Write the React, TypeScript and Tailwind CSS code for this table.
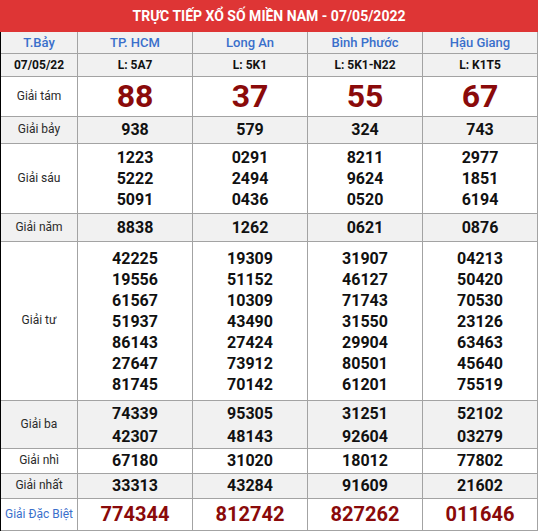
import React from 'react';

const provinces = [
  { name: 'TP. HCM', code: 'L: 5A7' },
  { name: 'Long An', code: 'L: 5K1' },
  { name: 'Bình Phước', code: 'L: 5K1-N22' },
  { name: 'Hậu Giang', code: 'L: K1T5' },
];

type Row = {
  label: string;
  h: string;
  lh: string;
  shaded?: boolean;
  kind?: 'big' | 'special';
  values: string[][];
};

const rows: Row[] = [
  { label: 'Giải tám', h: 'h-[39px]', lh: 'leading-[39px]', kind: 'big', values: [['88'], ['37'], ['55'], ['67']] },
  { label: 'Giải bảy', h: 'h-[26px]', lh: 'leading-[26px]', shaded: true, values: [['938'], ['579'], ['324'], ['743']] },
  {
    label: 'Giải sáu',
    h: 'h-[69px]',
    lh: 'leading-[21px]',
    values: [
      ['1223', '5222', '5091'],
      ['0291', '2494', '0436'],
      ['8211', '9624', '0520'],
      ['2977', '1851', '6194'],
    ],
  },
  { label: 'Giải năm', h: 'h-[27px]', lh: 'leading-[27px]', shaded: true, values: [['8838'], ['1262'], ['0621'], ['0876']] },
  {
    label: 'Giải tư',
    h: 'h-[158px]',
    lh: 'leading-[21px]',
    values: [
      ['42225', '19556', '61567', '51937', '86143', '27647', '81745'],
      ['19309', '51152', '10309', '43490', '27424', '73912', '70142'],
      ['31907', '46127', '71743', '31550', '29904', '80501', '61201'],
      ['04213', '50420', '70530', '23126', '63463', '45640', '75519'],
    ],
  },
  {
    label: 'Giải ba',
    h: 'h-[47px]',
    lh: 'leading-[23px]',
    shaded: true,
    values: [
      ['74339', '42307'],
      ['95305', '48143'],
      ['31251', '92604'],
      ['52102', '03279'],
    ],
  },
  { label: 'Giải nhì', h: 'h-[24px]', lh: 'leading-[24px]', values: [['67180'], ['31020'], ['18012'], ['77802']] },
  { label: 'Giải nhất', h: 'h-[24px]', lh: 'leading-[24px]', shaded: true, values: [['33313'], ['43284'], ['91609'], ['21602']] },
  { label: 'Giải Đặc Biệt', h: 'h-[31px]', lh: 'leading-[31px]', kind: 'special', values: [['774344'], ['812742'], ['827262'], ['011646']] },
];

export default function App() {
  return (
    <div className="w-[538px] h-[532px] bg-white font-['Roboto','Liberation_Sans',sans-serif]">
      {/* Title bar */}
      <div className="h-[32px] bg-[#de3535] flex items-center justify-center text-white font-bold text-[14px]">
        TRỰC TIẾP XỔ SỐ MIỀN NAM - 07/05/2022
      </div>

      <div className="grid grid-cols-[76px_114px_114px_114px_114px] gap-px bg-[#a3a3a3] border-l border-l-black pr-px pb-px">
        {/* Province names */}
        <div className="h-[21px] bg-[#f1f1f1] flex items-center justify-center text-[13px] font-medium text-[#3a6fcb]">
          T.Bảy
        </div>
        {provinces.map((p) => (
          <div key={p.name} className="h-[21px] bg-[#f1f1f1] flex items-center justify-center text-[13px] font-medium text-[#3a6fcb]">
            {p.name}
          </div>
        ))}

        {/* Dates and codes */}
        <div className="h-[22px] bg-[#f1f1f1] flex items-center justify-center text-[12px] font-bold text-[#111]">
          07/05/22
        </div>
        {provinces.map((p) => (
          <div key={p.code} className="h-[22px] bg-[#f1f1f1] flex items-center justify-center text-[12px] font-bold text-[#111]">
            {p.code}
          </div>
        ))}

        {rows.map((row) => (
          <React.Fragment key={row.label}>
            <div
              className={`${row.h} ${row.shaded ? 'bg-[#f1f1f1]' : 'bg-white'} flex items-center justify-center pb-[2px] text-[12px] ${
                row.kind === 'special' ? 'text-[#3a6fcb]' : 'text-[#2a2a2a]'
              }`}
            >
              {row.label}
            </div>
            {row.values.map((nums, i) => (
              <div
                key={i}
                className={`${row.h} ${row.shaded ? 'bg-[#f1f1f1]' : 'bg-white'} flex flex-col items-center justify-center`}
              >
                {nums.map((n) => (
                  <span
                    key={n}
                    className={
                      row.kind === 'big'
                        ? 'text-[32px] leading-[39px] font-bold text-[#8a0a0a]'
                        : row.kind === 'special'
                        ? 'text-[20px] leading-[31px] font-bold text-[#8a0a0a]'
                        : `text-[16px] ${row.lh} font-bold text-[#111]`
                    }
                  >
                    {n}
                  </span>
                ))}
              </div>
            ))}
          </React.Fragment>
        ))}
      </div>
    </div>
  );
}
